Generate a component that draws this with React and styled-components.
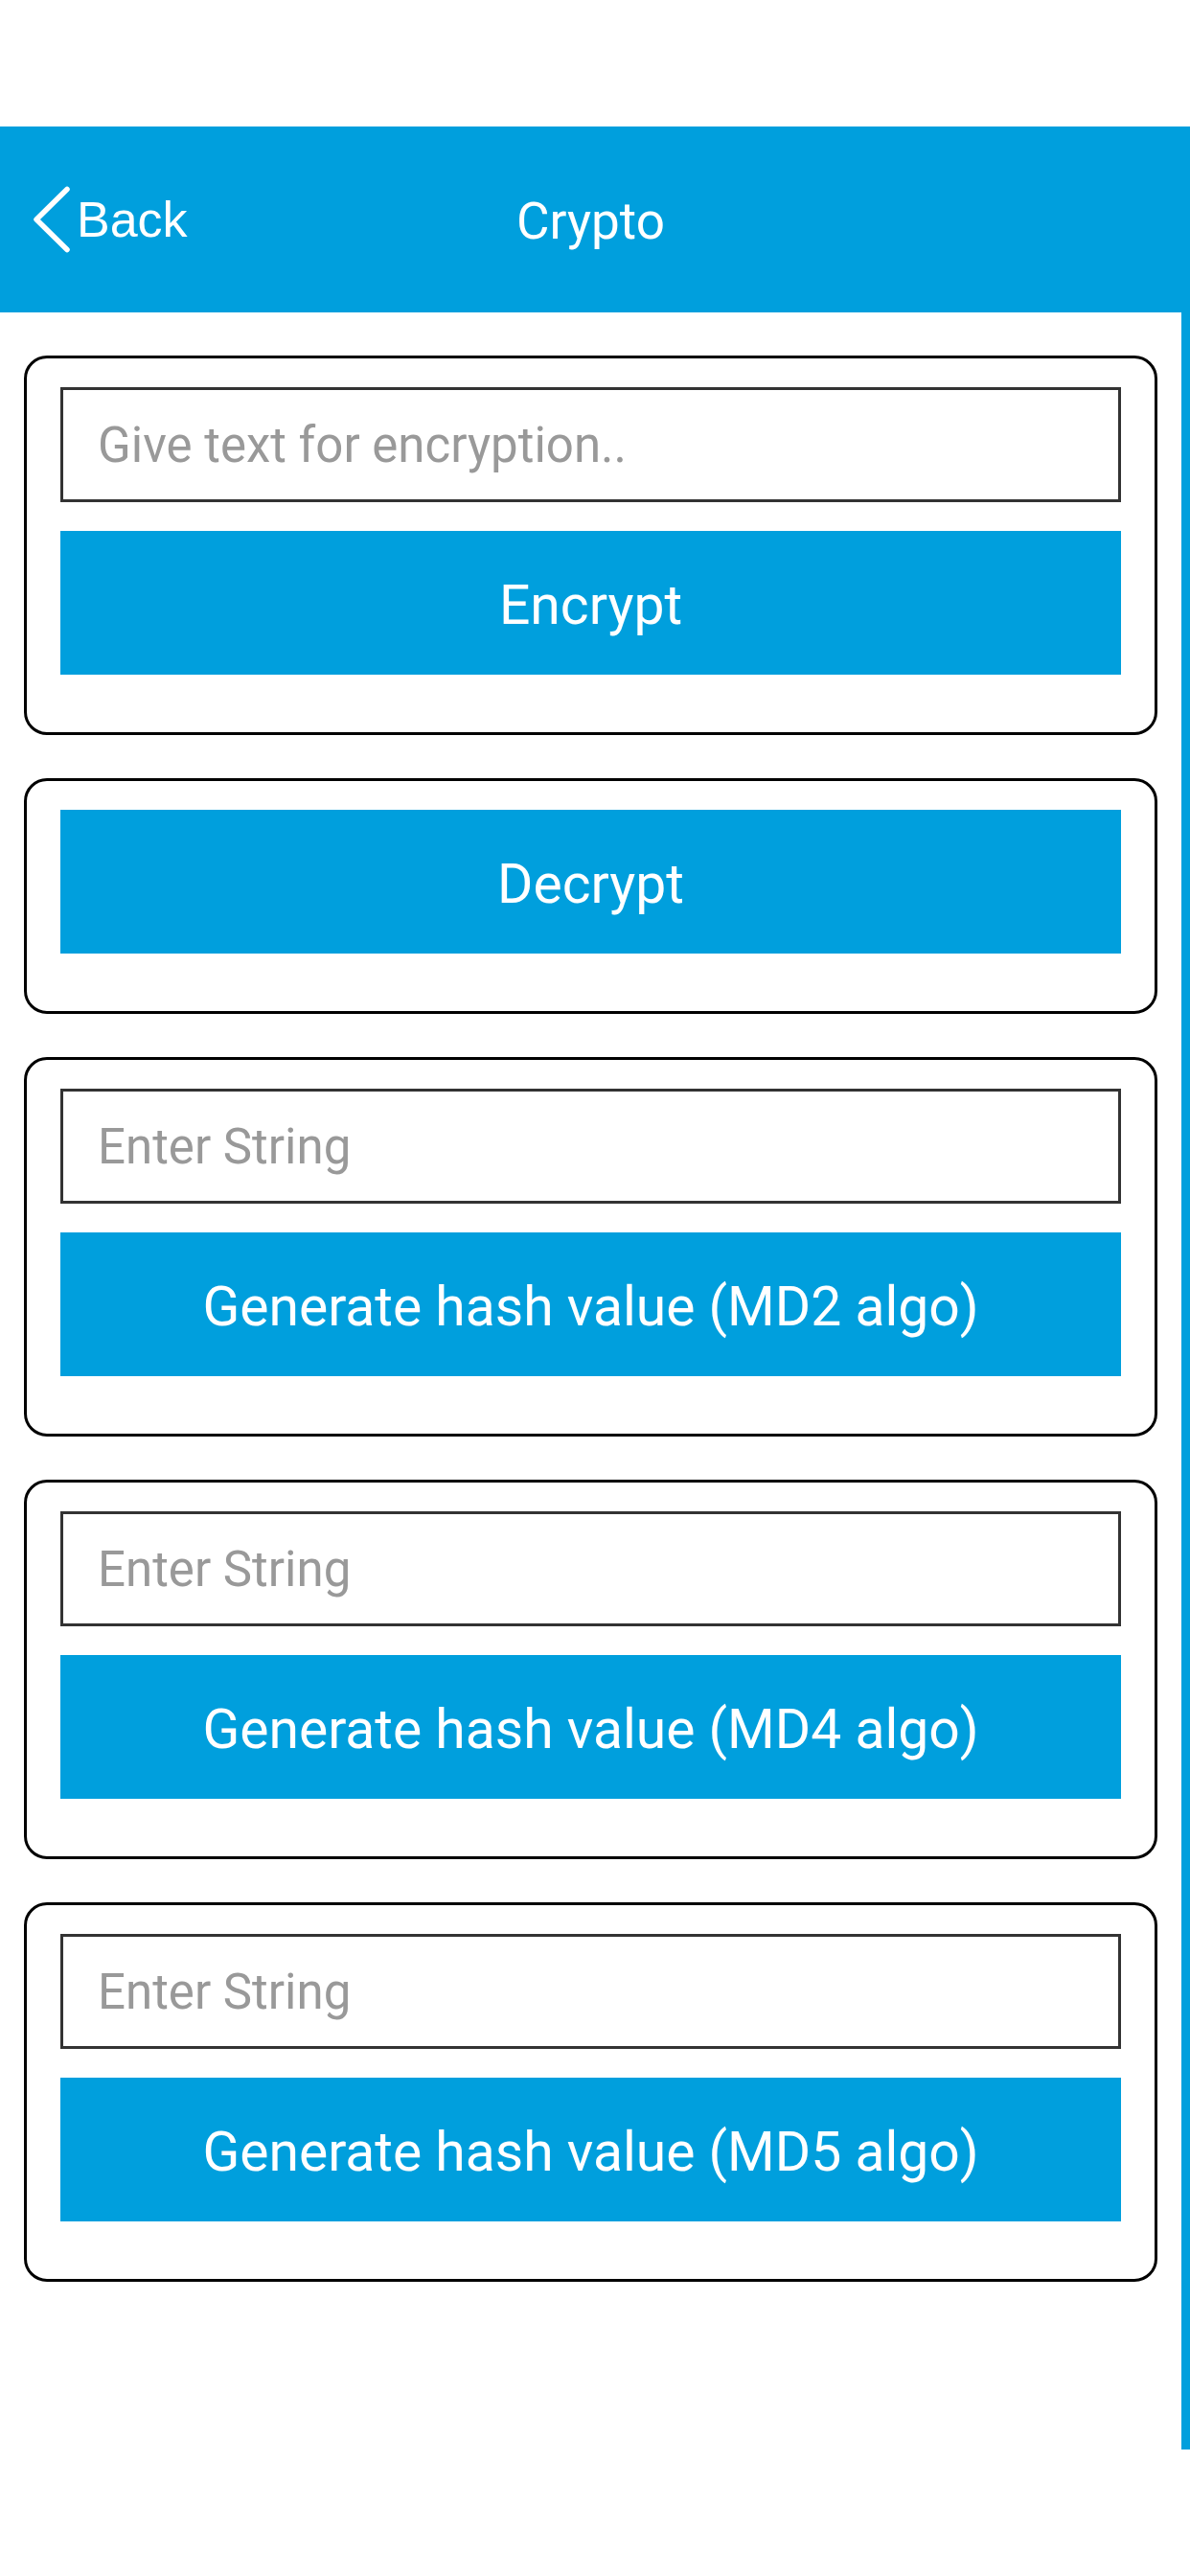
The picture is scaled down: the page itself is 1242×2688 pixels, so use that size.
import React, { useState } from "react";
import styled, { createGlobalStyle } from "styled-components";

const BLUE = "#009fdd";
const RAIL = "9px";

const GlobalStyle = createGlobalStyle`
  body {
    margin: 0;
    background: #fff;
    font-family: Roboto, "Liberation Sans", sans-serif;
  }
  *, *::before, *::after {
    box-sizing: border-box;
  }
`;

const Screen = styled.div`
  display: flex;
  flex-direction: column;
  min-height: 100vh;
  padding: 132px 0;
`;

const Header = styled.header`
  display: grid;
  grid-template-columns: 1fr auto 1fr;
  align-items: center;
  min-height: 194px;
  padding: 0 calc(32px + ${RAIL}) 0 32px;
  background: ${BLUE};
  color: #fff;
`;

const BackButton = styled.button`
  display: flex;
  align-items: center;
  gap: 7px;
  justify-self: start;
  padding: 0;
  border: 0;
  background: none;
  color: inherit;
  font: 52px/60px "Liberation Sans", Arial, sans-serif;
  cursor: pointer;
`;

const Title = styled.h1`
  margin: 0;
  padding-top: 4px;
  font-size: 53px;
  font-weight: 400;
  line-height: 60px;
`;

const Content = styled.main`
  display: flex;
  flex: 1;
  flex-direction: column;
  gap: 45px;
  padding: 45px 25px;
  border-right: ${RAIL} solid ${BLUE};
`;

const Card = styled.form`
  display: flex;
  flex-direction: column;
  gap: 30px;
  padding: 30px 35px 60px;
  border: 3px solid #000;
  border-radius: 24px;
`;

const TextField = styled.input`
  width: 100%;
  height: 120px;
  padding: 0 36px;
  border: 3px solid #333;
  border-radius: 0;
  background: #fff;
  color: #333;
  font-family: inherit;
  font-size: 51px;

  &::placeholder {
    color: #999;
    opacity: 1;
  }
`;

const ActionButton = styled.button`
  width: 100%;
  height: 150px;
  padding: 4px 0 0;
  border: 0;
  background: ${BLUE};
  color: #fff;
  font-family: inherit;
  font-size: 57px;
  cursor: pointer;
`;

const cards = [
  { id: "encrypt", placeholder: "Give text for encryption..", action: "Encrypt" },
  { id: "decrypt", action: "Decrypt" },
  { id: "md2", placeholder: "Enter String", action: "Generate hash value (MD2 algo)" },
  { id: "md4", placeholder: "Enter String", action: "Generate hash value (MD4 algo)" },
  { id: "md5", placeholder: "Enter String", action: "Generate hash value (MD5 algo)" },
];

function BackIcon() {
  return (
    <svg width="41" height="70" viewBox="0 0 41 70" fill="none" aria-hidden="true">
      <path
        d="M38 3.5 L6 35 L38 66.5"
        stroke="currentColor"
        strokeWidth="5.5"
        strokeLinecap="round"
        strokeLinejoin="round"
      />
    </svg>
  );
}

function CryptoCard({ placeholder, action }) {
  const [text, setText] = useState("");
  return (
    <Card onSubmit={(event) => event.preventDefault()}>
      {placeholder && (
        <TextField
          type="text"
          aria-label={`${placeholder} ${action}`}
          placeholder={placeholder}
          value={text}
          onChange={(event) => setText(event.target.value)}
        />
      )}
      <ActionButton type="submit">{action}</ActionButton>
    </Card>
  );
}

export default function App() {
  return (
    <>
      <GlobalStyle />
      <Screen>
        <Header>
          <BackButton type="button">
            <BackIcon />
            Back
          </BackButton>
          <Title>Crypto</Title>
        </Header>
        <Content>
          {cards.map(({ id, placeholder, action }) => (
            <CryptoCard key={id} placeholder={placeholder} action={action} />
          ))}
        </Content>
      </Screen>
    </>
  );
}
